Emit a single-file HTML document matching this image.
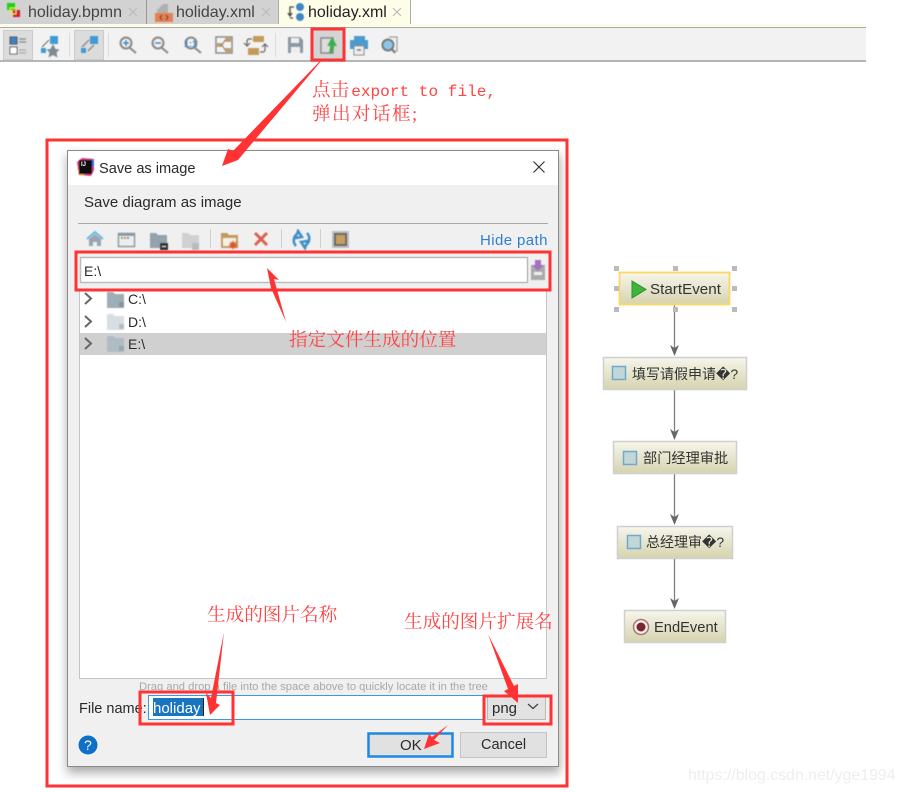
<!DOCTYPE html>
<html><head><meta charset="utf-8"><style>
html,body{margin:0;padding:0;background:#fff;width:904px;height:792px;overflow:hidden}
svg{display:block;position:absolute;left:0;top:0;filter:blur(.35px)}
.ui{font-family:"Liberation Sans","Noto Sans CJK SC",sans-serif;fill:#2a2a2a}
.cn{font-family:"Liberation Sans","Noto Sans CJK SC","DejaVu Sans",sans-serif;fill:#333}
.an{font-family:"Liberation Serif","Noto Serif CJK SC",serif;fill:#f44;font-size:18.6px}
</style></head><body>
<svg width="904" height="792" viewBox="0 0 904 792" xmlns="http://www.w3.org/2000/svg">
<defs>
<linearGradient id="g" x1="0" y1="0" x2="0" y2="1"><stop offset="0" stop-color="#f6f6ec"/><stop offset="1" stop-color="#d6d3ae"/></linearGradient>
<filter id="s" x="-5%" y="-5%" width="110%" height="110%"><feGaussianBlur stdDeviation="5"/></filter>
<filter id="b"><feGaussianBlur stdDeviation="0.5"/></filter>
</defs>
<!-- tabs -->
<rect x="0" y="0" width="866" height="25" fill="#fff"/>
<rect x="0" y="0" width="146" height="24" fill="#d2d2d2"/>
<rect x="147" y="0" width="132" height="24" fill="#d2d2d2"/>
<rect x="146" y="0" width="1" height="24" fill="#999"/>
<rect x="279" y="0" width="132" height="24" fill="#fdfde8"/>
<rect x="278" y="0" width="1" height="24" fill="#aaa"/>
<rect x="410" y="0" width="1" height="24" fill="#aaa"/>
<rect x="0" y="24" width="866" height="3" fill="#fdfde8"/>
<rect x="0" y="27" width="866" height="1" fill="#aaa"/>
<rect x="0" y="28" width="866" height="33" fill="#f2f2f2"/>
<rect x="0" y="60" width="866" height="2" fill="#b5b5b5"/>
<g filter="url(#b)">
<rect x="7" y="3" width="8" height="7" fill="#1fd01f"/><rect x="13" y="10" width="7" height="7" fill="#d8133a"/><rect x="10" y="8" width="6" height="6" fill="none" stroke="#e6e640"/>
<path d="M157 14V10l6-6h5v10z" fill="#b0b0b0"/><rect x="155" y="13" width="18" height="9" fill="#e47f50"/>
<path d="M162 15l-2 2.500 2 2.500M166 15l2 2.500-2 2.500" stroke="#333" fill="none"/>
<circle cx="300" cy="7" r="4" fill="#3f85c5"/><circle cx="300" cy="17" r="4" fill="#3f85c5"/>
<path d="M294 7h-4v8M288 13l2 3 2-3M293 18h-3" stroke="#444" fill="none" stroke-width="1.300"/>
</g>
<g class="ui" font-size="16">
<text x="28" y="17" style="fill:#444">holiday.bpmn</text>
<text x="176" y="17" style="fill:#444">holiday.xml</text>
<text x="308" y="17" style="fill:#222">holiday.xml</text>
</g>
<g stroke="#bbb" stroke-width="1.200"><path d="M129 8l8 8M137 8l-8 8M262 8l8 8M270 8l-8 8M393 8l8 8M401 8l-8 8"/></g>
<!-- toolbar -->
<rect x="3.500" y="30.500" width="29" height="29" fill="#dcdcdc" stroke="#ccc"/>
<rect x="74.500" y="30.500" width="29" height="29" fill="#dcdcdc" stroke="#ccc"/>
<rect x="312" y="30" width="32" height="30" fill="#d4d4d4"/>
<path d="M69.500 33v24M108.500 33v24M275.500 33v24" stroke="#ddd"/>
<g filter="url(#b)">
<rect x="10" y="37" width="7" height="7" fill="#3c82c0" stroke="#555"/><rect x="10" y="47" width="7" height="7" fill="#fff" stroke="#555"/>
<path d="M19 39h7M19 42h7" stroke="#888" stroke-width="1.300"/><path d="M19 50h7M19 53h7" stroke="#aaa" stroke-width="1.300"/>
<rect x="50" y="36" width="8" height="8" fill="#3f9ad5"/><rect x="41" y="48" width="5" height="5" fill="#3f9ad5"/><path d="M42 47l7-7" stroke="#777" stroke-width="1.200"/>
<path d="M53 44l2.500 5 4 .5-3 3 1 5-4.500-2.500-4.500 2.500 1-5-3-3 4-.5z" fill="#7f8a92"/>
<rect x="90" y="36" width="8" height="8" fill="#3f9ad5"/><rect x="81" y="48" width="5" height="5" fill="#3f9ad5"/>
<path d="M82 47l7-7M88 51l6-6" stroke="#777" stroke-width="1.200"/>
<g fill="none" stroke="#888" stroke-width="2">
<circle cx="126" cy="43" r="5.500"/><path d="M130 48l6 5"/>
<circle cx="158" cy="43" r="5.500"/><path d="M162 48l6 5"/>
<circle cx="191" cy="43" r="5.500"/><path d="M195 48l6 5"/></g>
<path d="M123 43h6M126 40v6M155 43h6" stroke="#3f87c0" stroke-width="1.500"/>
<text x="184" y="47" font-size="9" font-weight="bold" style="fill:#3f87c0;font-family:'Liberation Sans',sans-serif">1:1</text>
<rect x="216" y="37" width="16" height="16" fill="#f4f4f4" stroke="#888" stroke-width="1.500"/>
<rect x="225" y="38" width="6" height="4" fill="#c49a60"/><rect x="225" y="48" width="6" height="4" fill="#c49a60"/><rect x="217" y="43" width="5" height="4" fill="#c49a60"/>
<path d="M222 45l3-5M222 45l3 5" stroke="#666"/>
<rect x="253" y="36" width="11" height="6" fill="#c49a5c"/><rect x="248" y="48" width="11" height="7" fill="#c49a5c"/>
<path d="M252 39h-3q-2 0-2 3v3M244 43l3 3 3-3M260 52h3q2 0 2-3v-4M262 47l3-3 3 3" fill="none" stroke="#666" stroke-width="1.200"/>
<path d="M288 37h12l3 3v13h-15z" fill="#8a98a4"/><rect x="291" y="38" width="8" height="5" fill="#eee"/><rect x="291" y="47" width="9" height="6" fill="#eee"/>
<rect x="321" y="38" width="12" height="15" fill="#ddd" stroke="#888" stroke-width="1.500"/>
<path d="M329 53q1-6 1-7h-3l5-9 5 9h-3q0 4-3 8z" fill="#3cae4e"/>
<path d="M354 36h11v5h-11z" fill="#4b9bd0"/><rect x="350" y="40" width="18" height="9" fill="#4b9bd0"/><rect x="354" y="46" width="10" height="9" fill="#eee" stroke="#888"/>
<rect x="357" y="49" width="4" height="2" fill="#888"/>
<path d="M389 37h8v14h-5" fill="#eee" stroke="#888"/><circle cx="388" cy="45" r="5.500" fill="#8cc5e8" stroke="#777" stroke-width="2"/><path d="M392 49l3 4" stroke="#777" stroke-width="2"/>
</g>
<!-- dialog -->
<rect x="67" y="155" width="493" height="618" fill="#888" filter="url(#s)" opacity=".7"/>
<rect x="67" y="150" width="492" height="617" fill="#f0f0f0"/>
<rect x="67" y="150" width="492" height="35" fill="#fff"/>
<rect x="67.500" y="150.500" width="491" height="616" fill="none" stroke="#8a8a8a"/>
<g filter="url(#b)">
<path d="M77 162l5-4 12 1 0 11-3 6-12-1z" fill="#d8367a"/><path d="M90 158l4 3v6l-4-2z" fill="#2c6fd8"/><path d="M77 168l3 7 5 0z" fill="#f09a20"/>
<rect x="79" y="160" width="13" height="14" fill="#111"/>
</g>
<text x="81" y="166" font-size="6" font-weight="bold" style="fill:#fff;font-family:'Liberation Sans',sans-serif">IJ</text>
<text class="ui" x="99" y="173" font-size="14.600">Save as image</text>
<path d="M533.500 161.500l11 11M544.500 161.500l-11 11" stroke="#333" stroke-width="1.200"/>
<text class="ui" x="84" y="207" font-size="15">Save diagram as image</text>
<rect x="78" y="223" width="470" height="1" fill="#a8a8a8"/>
<!-- dialog toolbar -->
<path d="M210.500 229v19M281.500 229v19M320.500 229v19" stroke="#d0d0d0"/>
<g filter="url(#b)">
<path d="M87 239l8-7 8 7" fill="none" stroke="#69b7e6" stroke-width="2"/><path d="M89 239l6-5 6 5v7h-4v-4h-4v4h-4z" fill="#9aa5ad"/>
<rect x="118.500" y="233.500" width="16" height="13" fill="#eee" stroke="#8a9aa5" stroke-width="1.500"/><rect x="118" y="233" width="17" height="3" fill="#8a9aa5"/>
<rect x="121" y="237" width="2" height="2" fill="#3fae4a"/><rect x="124" y="237" width="2" height="2" fill="#e05a40"/><rect x="127" y="237" width="2" height="2" fill="#3f87c0"/>
<path d="M150 233h6l2 2h9v13h-17z" fill="#93a2ac"/><rect x="160" y="243" width="8" height="7" fill="#333"/><rect x="162" y="246" width="4" height="1" fill="#ddd"/>
<path d="M182 233h6l2 2h9v13h-17z" fill="#d0d0d0"/><rect x="192" y="243" width="7" height="7" fill="#bbb"/>
<path d="M221 233h6l2 2h9v13h-17z" fill="#c49a5c"/><rect x="223" y="238" width="13" height="8" fill="#f4f0e4"/>
<path d="M233 240l1 2.500 2.500-1-1 2.500 2.500 1-2.500 1 1 2.500-2.500-1-1 2.500-1-2.500-2.500 1 1-2.500-2.500-1 2.500-1-1-2.500 2.500 1z" fill="#e0562c"/>
<path d="M255 233l12 12M267 233l-12 12" stroke="#d9614f" stroke-width="3"/>
<path d="M296 246a8 8 0 0 1 1-12l1-3 4 6-6 1 1-2M307 233a8 8 0 0 1-1 12l-1 3-4-6 6-1-1 2" fill="none" stroke="#3f8fc8" stroke-width="2.500"/>
<rect x="332" y="231" width="17" height="17" fill="#aaa" opacity=".7"/><rect x="334" y="233" width="13" height="13" fill="#666"/><rect x="336" y="235" width="9" height="9" fill="#c7a060"/>
</g>
<text class="ui" x="480" y="245" font-size="15" style="fill:#2f7fd0;letter-spacing:.4px">Hide path</text>
<!-- path field -->
<rect x="80.500" y="257.500" width="447" height="25" fill="#fff" stroke="#bcbcbc" stroke-width="1.500"/>
<text class="ui" x="84" y="276" font-size="14">E:\</text>
<g filter="url(#b)">
<path d="M531 265h14v15h-14z" fill="#aaa"/><rect x="534" y="272" width="8" height="3" fill="#eee"/>
<path d="M535 260h6v5h3l-6 6-6-6h3z" fill="#a56fc0"/>
</g>
<!-- tree -->
<rect x="79.500" y="289.500" width="467" height="389" fill="#fff" stroke="#c4c4c4"/>
<rect x="80" y="333" width="466" height="22" fill="#d0d0d0"/>
<path d="M85 293l6 5.500-6 5.500M85 316l6 5.500-6 5.500M85 338l6 5.500-6 5.500" fill="none" stroke="#666" stroke-width="2"/>
<g filter="url(#b)">
<path d="M107 292h6l2 2h9v14h-17z" fill="#9fadb5"/><rect x="119" y="302" width="5" height="5" fill="#88949c"/>
<path d="M107 314h6l2 2h9v14h-17z" fill="#d8dfe3"/><rect x="119" y="324" width="5" height="5" fill="#b5bdc2"/>
<path d="M107 336h6l2 2h9v14h-17z" fill="#b0bcc4"/><rect x="119" y="346" width="5" height="5" fill="#9aa5ac"/>
</g>
<g class="ui" font-size="14"><text x="128" y="304">C:\</text><text x="128" y="327">D:\</text><text x="128" y="349">E:\</text></g>
<text class="ui" x="139" y="690" font-size="11.200" style="fill:#a8a8a8">Drag and drop a file into the space above to quickly locate it in the tree</text>
<!-- bottom -->
<text class="ui" x="79" y="713" font-size="14.500">File name:</text>
<rect x="148.500" y="695.500" width="335" height="24" fill="#fff" stroke="#3c98e0"/>
<rect x="153" y="698" width="50" height="18" fill="#1a75c0"/>
<text class="ui" x="153" y="713" font-size="15" style="fill:#fff">holiday</text>
<rect x="203" y="698" width="1" height="18" fill="#222"/>
<rect x="487.500" y="696.500" width="58" height="23" fill="#e2e2e2" stroke="#b8b8b8"/>
<text class="ui" x="492" y="713" font-size="15">png</text>
<path d="M528 704l5 4.500 5-4.500" fill="none" stroke="#444" stroke-width="1.300"/>
<circle cx="88" cy="745" r="9.500" fill="#0f70c8"/>
<text x="84" y="750" font-size="14" style="fill:#fff;font-family:'Liberation Sans',sans-serif">?</text>
<rect x="368.500" y="733.500" width="84" height="23" fill="#e1e1e1" stroke="#1e88e0" stroke-width="2.500"/>
<text class="ui" x="400" y="750" font-size="15">OK</text>
<rect x="460.500" y="732.500" width="86" height="25" fill="#e1e1e1" stroke="#c4c4c4"/>
<text class="ui" x="481" y="749" font-size="14.500">Cancel</text>
<!-- flow -->
<path d="M674.500 305v45M674.500 389v46M674.500 474v47M674.500 558v47" fill="none" stroke="#808080" stroke-width="1.300"/>
<path d="M670 345l4.500 3 4.500-3-4.500 11zM670 429l4.500 3 4.500-3-4.500 11zM670 514l4.500 3 4.500-3-4.500 11zM670 598l4.500 3 4.500-3-4.500 11z" fill="#666"/>
<g stroke="#cfcfcf" stroke-width="1.500" fill="url(#g)">
<rect x="603.500" y="357.500" width="143" height="32"/>
<rect x="613.500" y="441.500" width="123" height="32"/>
<rect x="617.500" y="526.500" width="115" height="32"/>
<rect x="624.500" y="610.500" width="101" height="32"/>
</g>
<rect x="619.500" y="272.500" width="110" height="32" fill="url(#g)" stroke="#fdd75e" stroke-width="1.800"/>
<g fill="#bbb">
<rect x="614" y="266" width="5" height="5"/><rect x="673" y="266" width="5" height="5"/><rect x="732" y="266" width="5" height="5"/>
<rect x="614" y="286" width="5" height="5"/><rect x="732" y="286" width="5" height="5"/>
<rect x="614" y="307" width="5" height="5"/><rect x="673" y="307" width="5" height="5"/><rect x="732" y="307" width="5" height="5"/>
</g>
<path d="M632 281l14 8.500-14 8.500z" fill="#3db53a" stroke="#2e8f2e"/>
<g fill="#c0d6d8" stroke="#6fa9cf" stroke-width="1.500">
<rect x="612.500" y="366.500" width="13" height="13"/><rect x="623.500" y="451.500" width="13" height="13"/><rect x="627.500" y="535.500" width="13" height="13"/>
</g>
<circle cx="641" cy="627" r="7.500" fill="#f4f2e4" stroke="#a87878" stroke-width="1.500"/><circle cx="641" cy="627" r="4.500" fill="#7c2535"/>
<g class="cn" font-size="14.700">
<text x="650" y="294" font-size="15.200" style="fill:#333">StartEvent</text>
<text x="632" y="379" font-size="14">填写请假申请�?</text>
<text x="643" y="463" font-size="14.200">部门经理审批</text>
<text x="646" y="547" font-size="14">总经理审�?</text>
<text x="654" y="632">EndEvent</text>
</g>
<text x="688" y="780" font-size="15.900" style="font-family:'Liberation Sans',sans-serif;fill:#eeeeee">https://blog.csdn.net/yge1994</text>
<!-- annotation boxes -->
<g fill="none" stroke="#f33" stroke-width="3">
<rect x="47" y="140" width="520" height="646"/>
<rect x="312" y="29" width="32" height="31"/>
<rect x="76" y="252" width="474" height="38"/>
<rect x="140" y="692" width="93" height="32"/>
<rect x="484" y="696" width="67" height="28"/>
</g>
<!-- annotation arrows -->
<g fill="#f33">
<path d="M322 60L243 154 238 160 222 166 228 149 233 151 321 60z"/>
<path d="M286 322L274 279 279 280 267 268 271 288z"/>
<path d="M224 632L216 703 220 705 210 715 206 693 211 698z"/>
<path d="M488 634L514 686 518 684 518 703 504 691 508 689z"/>
<path d="M448 725L434 740 440 743 424 749 429 734 432 737z"/>
</g>
<!-- annotation text -->
<text class="an" x="312" y="96" style="letter-spacing:0">点击<tspan dx="2" font-size="16.100" style="font-family:'Liberation Mono',monospace">export to file,</tspan></text>
<text class="an" x="312" y="120" style="letter-spacing:1.400px">弹出对话框;</text>
<text class="an" x="289" y="346">指定文件生成的位置</text>
<text class="an" x="207" y="621">生成的图片名称</text>
<text class="an" x="404" y="628">生成的图片扩展名</text>
</svg>
</body></html>
